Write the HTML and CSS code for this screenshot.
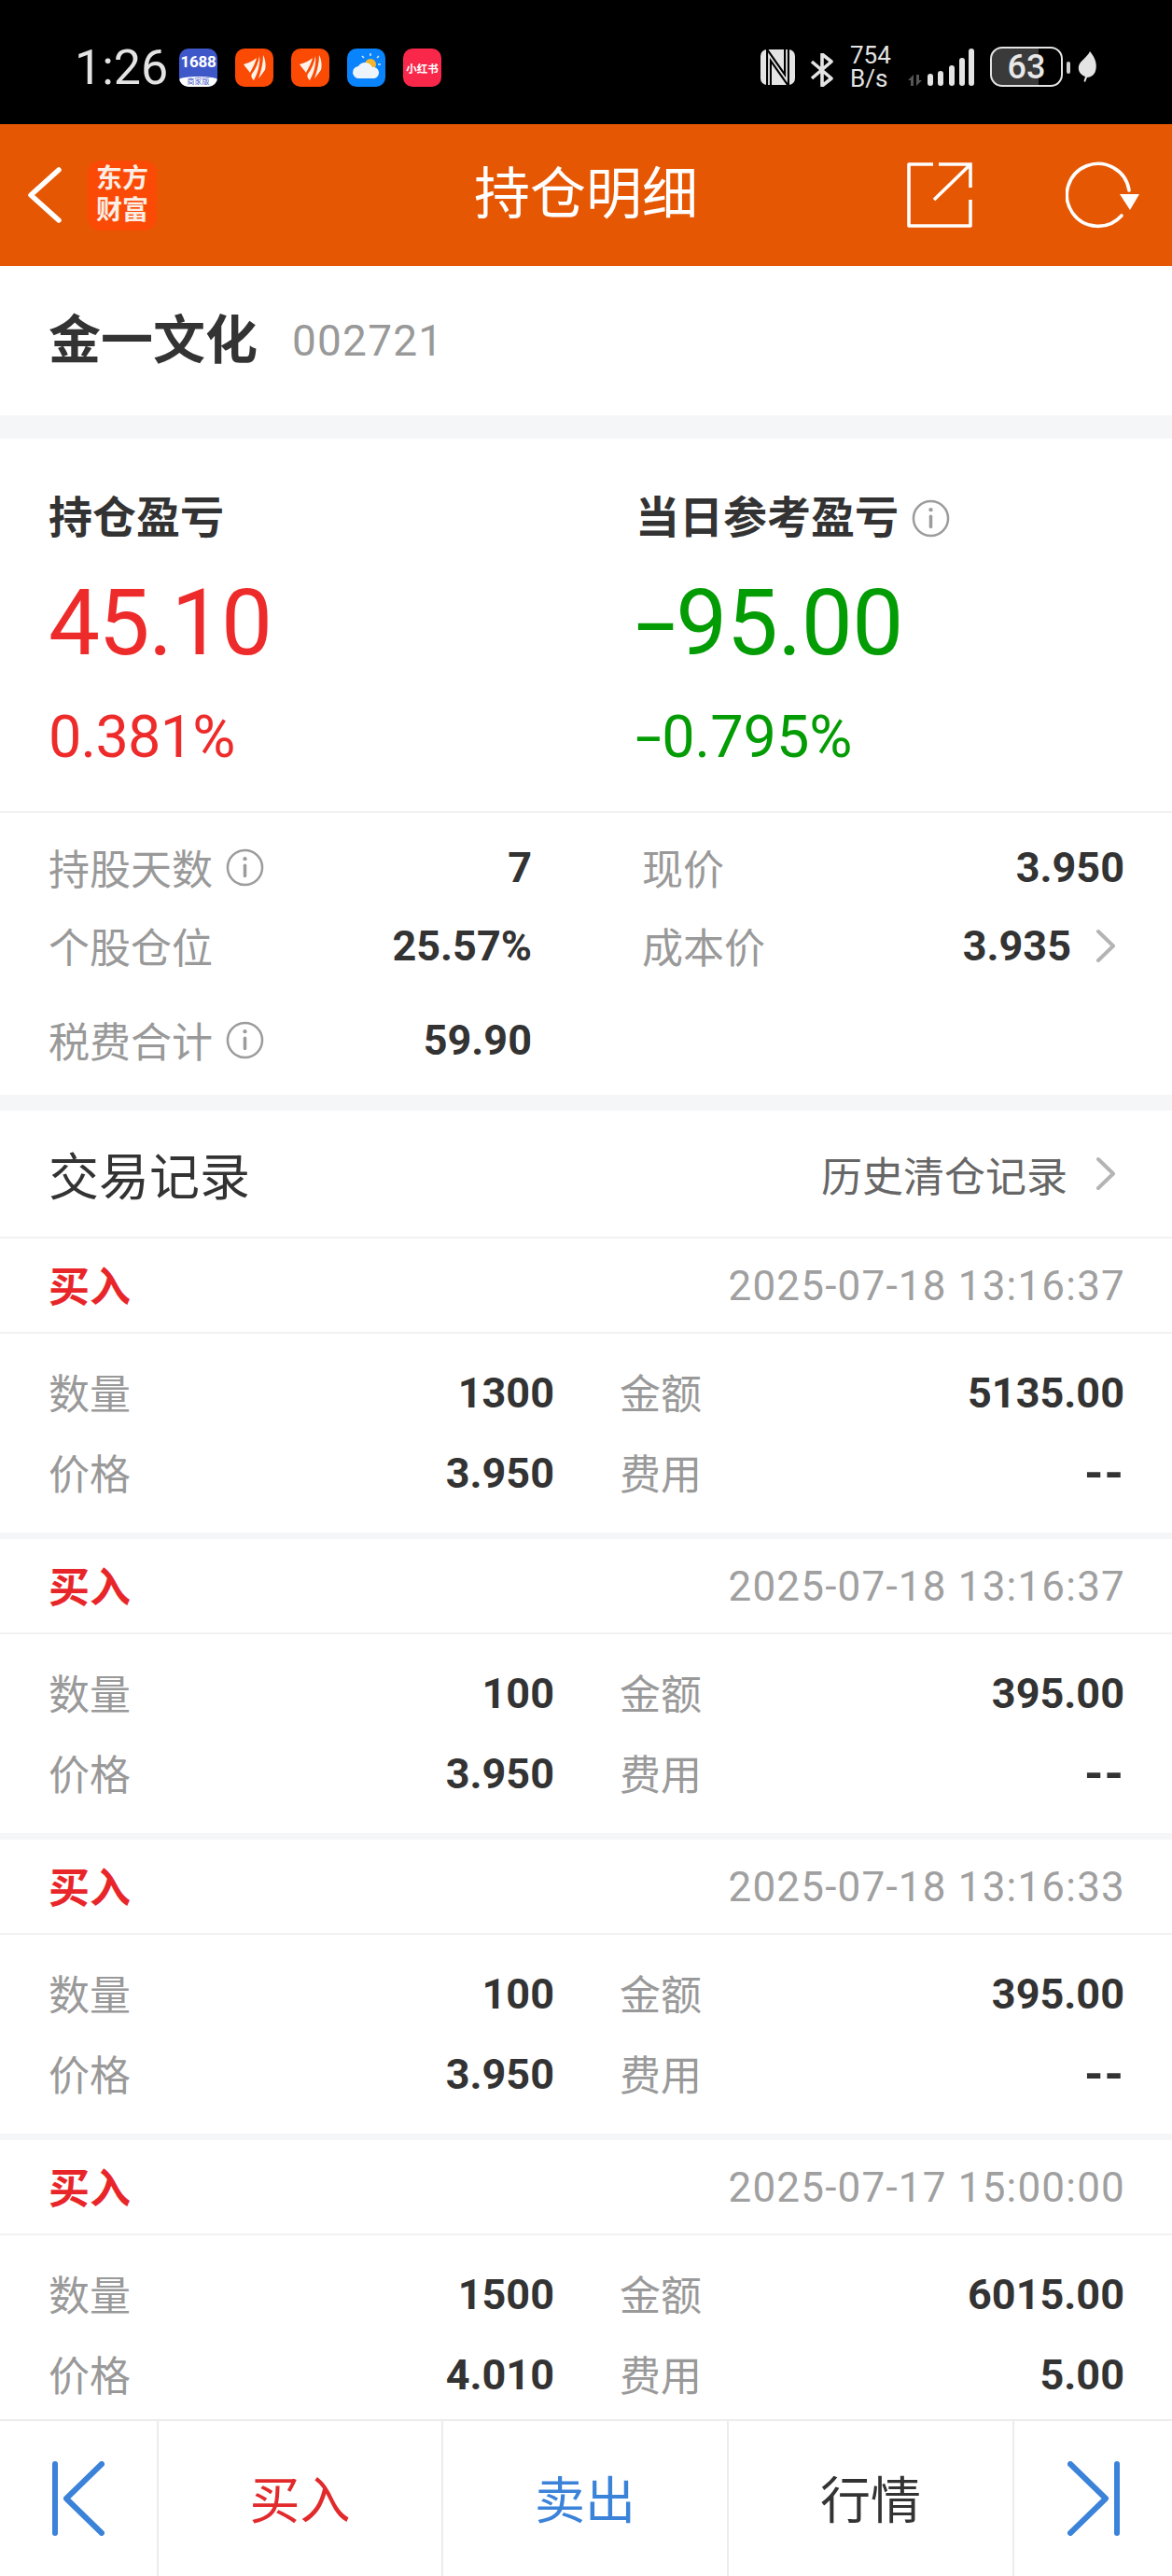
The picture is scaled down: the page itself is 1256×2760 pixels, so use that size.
FILE: index.html
```html
<!DOCTYPE html>
<html lang="zh-CN">
<head>
<meta charset="utf-8">
<title>持仓明细</title>
<link rel="stylesheet" href="styles.css">
</head>
<body>
<div class="page">
  <header class="status">
    <div class="status-left">
      <span class="clock">1:26</span>
      <span class="app app-1688"><b>1688</b><i>商家版</i></span>
      <span class="app app-orange"><svg viewBox="0 0 41 41"><path d="M9 17C15 15 20 13 23 10C22 15 18 22 16 26C14 23 11 20 9 17Z" fill="#fff3ea"/><path d="M26 8C27 15 25 25 20 34C17 31 17 29 18 27C22 22 25 15 26 8Z" fill="#fff3ea"/><path d="M30 7C33 12 33 20 32 23C29 27 27 30 25 32C28 24 30 15 30 7Z" fill="#fff3ea"/></svg></span>
      <span class="app app-orange"><svg viewBox="0 0 41 41"><path d="M9 17C15 15 20 13 23 10C22 15 18 22 16 26C14 23 11 20 9 17Z" fill="#fff3ea"/><path d="M26 8C27 15 25 25 20 34C17 31 17 29 18 27C22 22 25 15 26 8Z" fill="#fff3ea"/><path d="M30 7C33 12 33 20 32 23C29 27 27 30 25 32C28 24 30 15 30 7Z" fill="#fff3ea"/></svg></span>
      <span class="app app-weather"><svg viewBox="0 0 41 41"><path d="M25 5v3M16 8l2 2M34 8l-2 2M36 17h-3" stroke="#cfe6ff" stroke-width="1.6" fill="none"/><circle cx="25" cy="17" r="6" fill="#f6b62c"/><path d="M13 32a6.5 6.5 0 0 1-1-13 8.5 8.5 0 0 1 15 1 6 6 0 0 1 2 12z" fill="#eef4fb"/></svg></span>
      <span class="app app-red">小红书</span>
    </div>
    <div class="status-right">
      <svg class="nfc" viewBox="0 0 37 38"><rect width="37" height="38" rx="7" fill="#e4e4e4"/><path d="M9 38V6L28 33V0" fill="none" stroke="#000" stroke-width="6"/><path d="M9 38V6L28 33V0" fill="none" stroke="#e4e4e4" stroke-width="1.8"/></svg>
      <svg class="bt" viewBox="0 0 25 36"><path d="M2 9L23 27L13 35V1L23 9L2 27" fill="none" stroke="#e4e4e4" stroke-width="3.6" stroke-linejoin="round"/></svg>
      <span class="speed"><span>754</span><span>B/s</span></span>
      <svg class="signal" viewBox="0 0 73 42"><path d="M2 35L8 29V41H5V35ZM11 29H14V35H17L11 41Z" fill="#555"/><g fill="#e4e4e4"><rect x="23" y="28" width="6" height="13" rx="3"/><rect x="34" y="25" width="6" height="16" rx="3"/><rect x="46" y="19" width="6" height="22" rx="3"/><rect x="57" y="11" width="6" height="30" rx="3"/><rect x="67" y="1" width="6" height="40" rx="3"/></g></svg>
      <span class="battery"><span class="battery-num">63</span></span>
      <span class="battery-tip"></span>
      <svg class="leaf" viewBox="0 0 21 33"><path d="M13 0C19 7 21 14 19 21C18 25 14 28 10 28L8 33L6.500 32L8 27C3 25 0 21 1 16C2 10 10 7 13 0Z" fill="#e4e4e4"/></svg>
    </div>
  </header>

  <nav class="navbar">
    <svg class="back" viewBox="0 0 36 60"><path d="M33 3L3 30L33 57" fill="none" stroke="#fff" stroke-width="5.500" stroke-linecap="round" stroke-linejoin="round"/></svg>
    <span class="brand"><span>东方</span><span>财富</span></span>
    <h1 class="nav-title">持仓明细</h1>
    <svg class="share" viewBox="0 0 70 70"><path d="M28 2H2V68H68V40" fill="none" stroke="#fff" stroke-width="3.600" stroke-linejoin="round"/><path d="M29 40L67 3M34 2H68V27" fill="none" stroke="#fff" stroke-width="3.600"/></svg>
    <svg class="refresh" viewBox="0 0 80 72"><path d="M60 58A33.500 33.500 0 1 1 68 31" fill="none" stroke="#fff" stroke-width="3.600" stroke-linecap="round"/><path d="M58 35H79L69 52Z" fill="#fff"/></svg>
  </nav>

  <section class="stock">
    <span class="stock-name">金一文化</span>
    <span class="stock-code">002721</span>
  </section>

  <section class="pnl">
    <div class="pnl-col">
      <div class="pnl-label">持仓盈亏</div>
      <div class="pnl-value up">45.10</div>
      <div class="pnl-rate up">0.381%</div>
    </div>
    <div class="pnl-col pnl-col-right">
      <div class="pnl-label">当日参考盈亏 <svg class="info" viewBox="0 0 42 42"><circle cx="21" cy="21" r="19" fill="none" stroke="#9c9c9c" stroke-width="2.600"/><circle cx="21" cy="11.500" r="2.200" fill="#9c9c9c"/><rect x="19.200" y="17" width="3.600" height="15" rx="1.800" fill="#9c9c9c"/></svg></div>
      <div class="pnl-value down"><span class="neg">-</span>95.00</div>
      <div class="pnl-rate down"><span class="neg">-</span>0.795%</div>
    </div>
  </section>

  <section class="metrics">
    <div class="metric metric-left">
      <span class="metric-label">持股天数 <svg class="info" viewBox="0 0 42 42"><circle cx="21" cy="21" r="19" fill="none" stroke="#9c9c9c" stroke-width="2.600"/><circle cx="21" cy="11.500" r="2.200" fill="#9c9c9c"/><rect x="19.200" y="17" width="3.600" height="15" rx="1.800" fill="#9c9c9c"/></svg></span>
      <b class="metric-val">7</b>
    </div>
    <div class="metric metric-right">
      <span class="metric-label">现价</span>
      <b class="metric-val">3.950</b>
    </div>
    <div class="metric metric-left">
      <span class="metric-label">个股仓位</span>
      <b class="metric-val">25.57%</b>
    </div>
    <div class="metric metric-right">
      <span class="metric-label">成本价</span>
      <b class="metric-val metric-link">3.935<svg class="chev" viewBox="0 0 22 37"><path d="M3 3L19 18.500L3 34" fill="none" stroke="#b4b4b4" stroke-width="4" stroke-linecap="round" stroke-linejoin="round"/></svg></b>
    </div>
    <div class="metric metric-left">
      <span class="metric-label">税费合计 <svg class="info" viewBox="0 0 42 42"><circle cx="21" cy="21" r="19" fill="none" stroke="#9c9c9c" stroke-width="2.600"/><circle cx="21" cy="11.500" r="2.200" fill="#9c9c9c"/><rect x="19.200" y="17" width="3.600" height="15" rx="1.800" fill="#9c9c9c"/></svg></span>
      <b class="metric-val">59.90</b>
    </div>
  </section>

  <section class="records-head">
    <h2 class="records-title">交易记录</h2>
    <span class="records-link">历史清仓记录<svg class="chev" viewBox="0 0 22 37"><path d="M3 3L19 18.500L3 34" fill="none" stroke="#b4b4b4" stroke-width="4" stroke-linecap="round" stroke-linejoin="round"/></svg></span>
  </section>

  <main class="records">
    <article class="record">
      <div class="record-top"><b class="record-type">买入</b><time class="record-time">2025-07-18 13:16:37</time></div>
      <div class="record-grid">
        <span class="k">数量</span><b class="v">1300</b><span class="k k2">金额</span><b class="v">5135.00</b>
        <span class="k">价格</span><b class="v">3.950</b><span class="k k2">费用</span><b class="v v-empty">--</b>
      </div>
    </article>
    <article class="record">
      <div class="record-top"><b class="record-type">买入</b><time class="record-time">2025-07-18 13:16:37</time></div>
      <div class="record-grid">
        <span class="k">数量</span><b class="v">100</b><span class="k k2">金额</span><b class="v">395.00</b>
        <span class="k">价格</span><b class="v">3.950</b><span class="k k2">费用</span><b class="v v-empty">--</b>
      </div>
    </article>
    <article class="record">
      <div class="record-top"><b class="record-type">买入</b><time class="record-time">2025-07-18 13:16:33</time></div>
      <div class="record-grid">
        <span class="k">数量</span><b class="v">100</b><span class="k k2">金额</span><b class="v">395.00</b>
        <span class="k">价格</span><b class="v">3.950</b><span class="k k2">费用</span><b class="v v-empty">--</b>
      </div>
    </article>
    <article class="record">
      <div class="record-top"><b class="record-type">买入</b><time class="record-time">2025-07-17 15:00:00</time></div>
      <div class="record-grid">
        <span class="k">数量</span><b class="v">1500</b><span class="k k2">金额</span><b class="v">6015.00</b>
        <span class="k">价格</span><b class="v">4.010</b><span class="k k2">费用</span><b class="v">5.00</b>
      </div>
    </article>
  </main>

  <footer class="toolbar">
    <div class="tool tool-icon"><svg class="skip" viewBox="0 0 56 80"><path d="M3 3V77M53 3L15 40L53 77" fill="none" stroke="#3b82d9" stroke-width="6" stroke-linecap="round" stroke-linejoin="round"/></svg></div>
    <div class="tool tool-buy">买入</div>
    <div class="tool tool-sell">卖出</div>
    <div class="tool tool-quote">行情</div>
    <div class="tool tool-icon tool-end"><svg class="skip" viewBox="0 0 56 80"><path d="M53 3V77M3 3L41 40L3 77" fill="none" stroke="#3b82d9" stroke-width="6" stroke-linecap="round" stroke-linejoin="round"/></svg></div>
  </footer>
</div>
</body>
</html>
```
FILE: styles.css
```css
* { box-sizing: border-box; }
html, body { margin: 0; padding: 0; background: #fff; }
body { font-family: "Roboto", "Noto Sans CJK SC", sans-serif; color: #333; }
.page { width: 1256px; height: 2760px; display: flex; flex-direction: column; overflow: hidden; }

.status { height: 133px; flex: none; background: #000; display: flex; justify-content: space-between; align-items: flex-start; padding: 52px 80px 0 80px; }
.status-left { display: flex; align-items: center; height: 41px; }
.clock { color: #e4e4e4; font-size: 52px; line-height: 41px; width: 112px; flex: none; }
.app { width: 41px; height: 41px; border-radius: 10px; margin-right: 19px; display: flex; align-items: center; justify-content: center; overflow: hidden; flex: none; }
.app svg { width: 41px; height: 41px; }
.app-1688 { background: #3f58c9; color: #fff; flex-direction: column; justify-content: flex-start; }
.app-1688 b { font-size: 17px; line-height: 29px; height: 30px; font-weight: 700; letter-spacing: -0.2px; }
.app-1688 i { background: #fff; color: #3f58c9; width: 100%; height: 11px; line-height: 11px; font-size: 8px; font-style: normal; text-align: center; border-radius: 50% 50% 0 0 / 3px 3px 0 0; }
.app-orange { background: #fa4a04; }
.app-weather { background: #0a84fc; }
.app-red { background: #f9284a; color: #fff; font-size: 11.5px; font-weight: 700; white-space: nowrap; }
.status-right { display: flex; align-items: flex-start; }
.nfc { width: 37px; height: 38px; margin-top: 1px; flex: none; }
.bt { width: 25px; height: 36px; margin: 5px 0 0 16px; flex: none; }
.speed { display: flex; flex-direction: column; color: #e4e4e4; font-size: 26px; line-height: 25px; margin: -5px 0 0 18px; width: 44px; flex: none; }
.signal { width: 73px; height: 42px; margin: -1px 0 0 16px; flex: none; }
.battery { width: 78px; height: 43px; margin: -2px 0 0 17px; border: 2.5px solid #e4e4e4; border-radius: 13px; background: linear-gradient(to right, #3a3a3a 68%, #000 68%); display: flex; align-items: center; justify-content: center; flex: none; }
.battery-num { color: #e8e8e8; font-size: 36px; font-weight: 500; line-height: 38px; }
.battery-tip { width: 4px; height: 13px; background: #cfcfcf; border-radius: 2px; margin: 14px 0 0 4px; flex: none; }
.leaf { width: 21px; height: 33px; margin: 3px 0 0 8px; flex: none; }

.navbar { height: 152px; flex: none; background: #e65703; display: flex; align-items: center; padding: 0 0 0 30px; position: relative; }
.back { width: 36px; height: 60px; flex: none; }
.brand { width: 74px; height: 75px; background: #fb4a05; border-radius: 14px; margin-left: 28px; color: #fbeee5; font-size: 28px; font-weight: 700; line-height: 34px; display: flex; flex-direction: column; align-items: center; justify-content: center; flex: none; }
.nav-title { position: absolute; left: 0; right: 0; margin: 0; text-align: center; font-size: 60px; font-weight: 400; color: #fff; line-height: 64px; pointer-events: none; }
.share { width: 70px; height: 70px; margin-left: 804px; flex: none; }
.refresh { width: 80px; height: 72px; margin-left: 100px; flex: none; }

.stock { height: 160px; flex: none; display: flex; align-items: center; padding: 0 52px; }
.stock-name { font-size: 56px; font-weight: 700; color: #333; line-height: 64px; }
.stock-code { font-size: 46px; color: #999; margin-left: 37px; letter-spacing: 1.2px; }

.pnl { flex: none; border-top: 25px solid #f5f6f8; height: 426px; display: grid; grid-template-columns: 628px 1fr; border-bottom: 2px solid #f2f2f2; }
.pnl-col { padding: 60px 0 0 52px; }
.pnl-col-right { padding-left: 53px; }
.pnl-label { font-size: 47px; font-weight: 700; line-height: 50px; height: 50px; color: #333; display: flex; align-items: center; gap: 14px; }
.pnl-value { font-size: 98px; line-height: 110px; margin-top: 33px; letter-spacing: -1.5px; }
.pnl-value.down { letter-spacing: -0.5px; }
.pnl-rate { font-size: 63px; line-height: 70px; margin-top: 32px; letter-spacing: -0.8px; }
.pnl-rate.down { letter-spacing: 0; }
.neg { display: inline-block; transform: scaleX(1.6); transform-origin: 0 50%; margin-right: 0.17em; }
.up { color: #ee2b2b; }
.down { color: #049c04; }

.metrics { height: 302px; flex: none; display: grid; grid-template-columns: 628px 1fr; grid-template-rows: 84px 84px 118px; padding-top: 16px; }
.metric { display: flex; justify-content: space-between; align-items: center; font-size: 44px; }
.metric-left { padding: 0 58px 0 52px; }
.metric-right { padding: 0 51px 0 60px; }
.metric-label { color: #999; display: flex; align-items: center; gap: 14px; }
.metric-val { color: #333; font-weight: 700; font-size: 45px; display: flex; align-items: center; }
.info { width: 41px; height: 41px; flex: none; }
.metric-link { margin-right: 9px; }
.chev { width: 22px; height: 37px; margin-left: 26px; flex: none; }

.records-head { flex: none; height: 154px; border-top: 17px solid #f5f6f8; border-bottom: 2px solid #f2f2f2; display: flex; justify-content: space-between; align-items: center; padding: 0 60px 0 52px; }
.records-title { margin: 0; font-size: 54px; font-weight: 400; color: #333; }
.records-link { font-size: 44px; color: #666; display: flex; align-items: center; }
.records-link .chev { margin-left: 30px; }

.records { flex: 1; min-height: 0; overflow: hidden; }
.record { height: 322px; border-bottom: 7px solid #f5f6f8; }
.record-top { height: 102px; border-bottom: 2px solid #f2f2f2; display: flex; justify-content: space-between; align-items: center; padding: 0 51px 0 52px; }
.record-type { color: #e8262a; font-size: 44px; font-weight: 700; margin-top: -3px; }
.record-time { color: #a0a0a0; font-size: 44px; letter-spacing: 1.2px; margin: 2px -1px 0 0; }
.record-grid { display: grid; grid-template-columns: 140px 402px 120px 1fr; grid-auto-rows: 86px; padding: 20px 51px 0 52px; align-items: center; font-size: 44px; }
.k { color: #999; margin-top: -3px; }
.k2 { padding-left: 70px; white-space: nowrap; }
.v { color: #333; font-weight: 700; text-align: right; font-size: 45px; }
.v-empty { font-size: 52px; letter-spacing: 1px; }

.toolbar { height: 168px; flex: none; border-top: 2px solid #ececec; background: #fff; display: grid; grid-template-columns: 170px 305px 306px 306px 1fr; }
.tool { display: flex; align-items: center; justify-content: center; font-size: 54px; border-right: 2px solid #ececec; padding-bottom: 3px; }
.tool-icon { padding-bottom: 0; }
.tool-end { border-right: 0; }
.tool-buy { color: #e2292c; }
.tool-sell { color: #3b82d9; }
.tool-quote { color: #333; }
.skip { width: 56px; height: 80px; }
```
